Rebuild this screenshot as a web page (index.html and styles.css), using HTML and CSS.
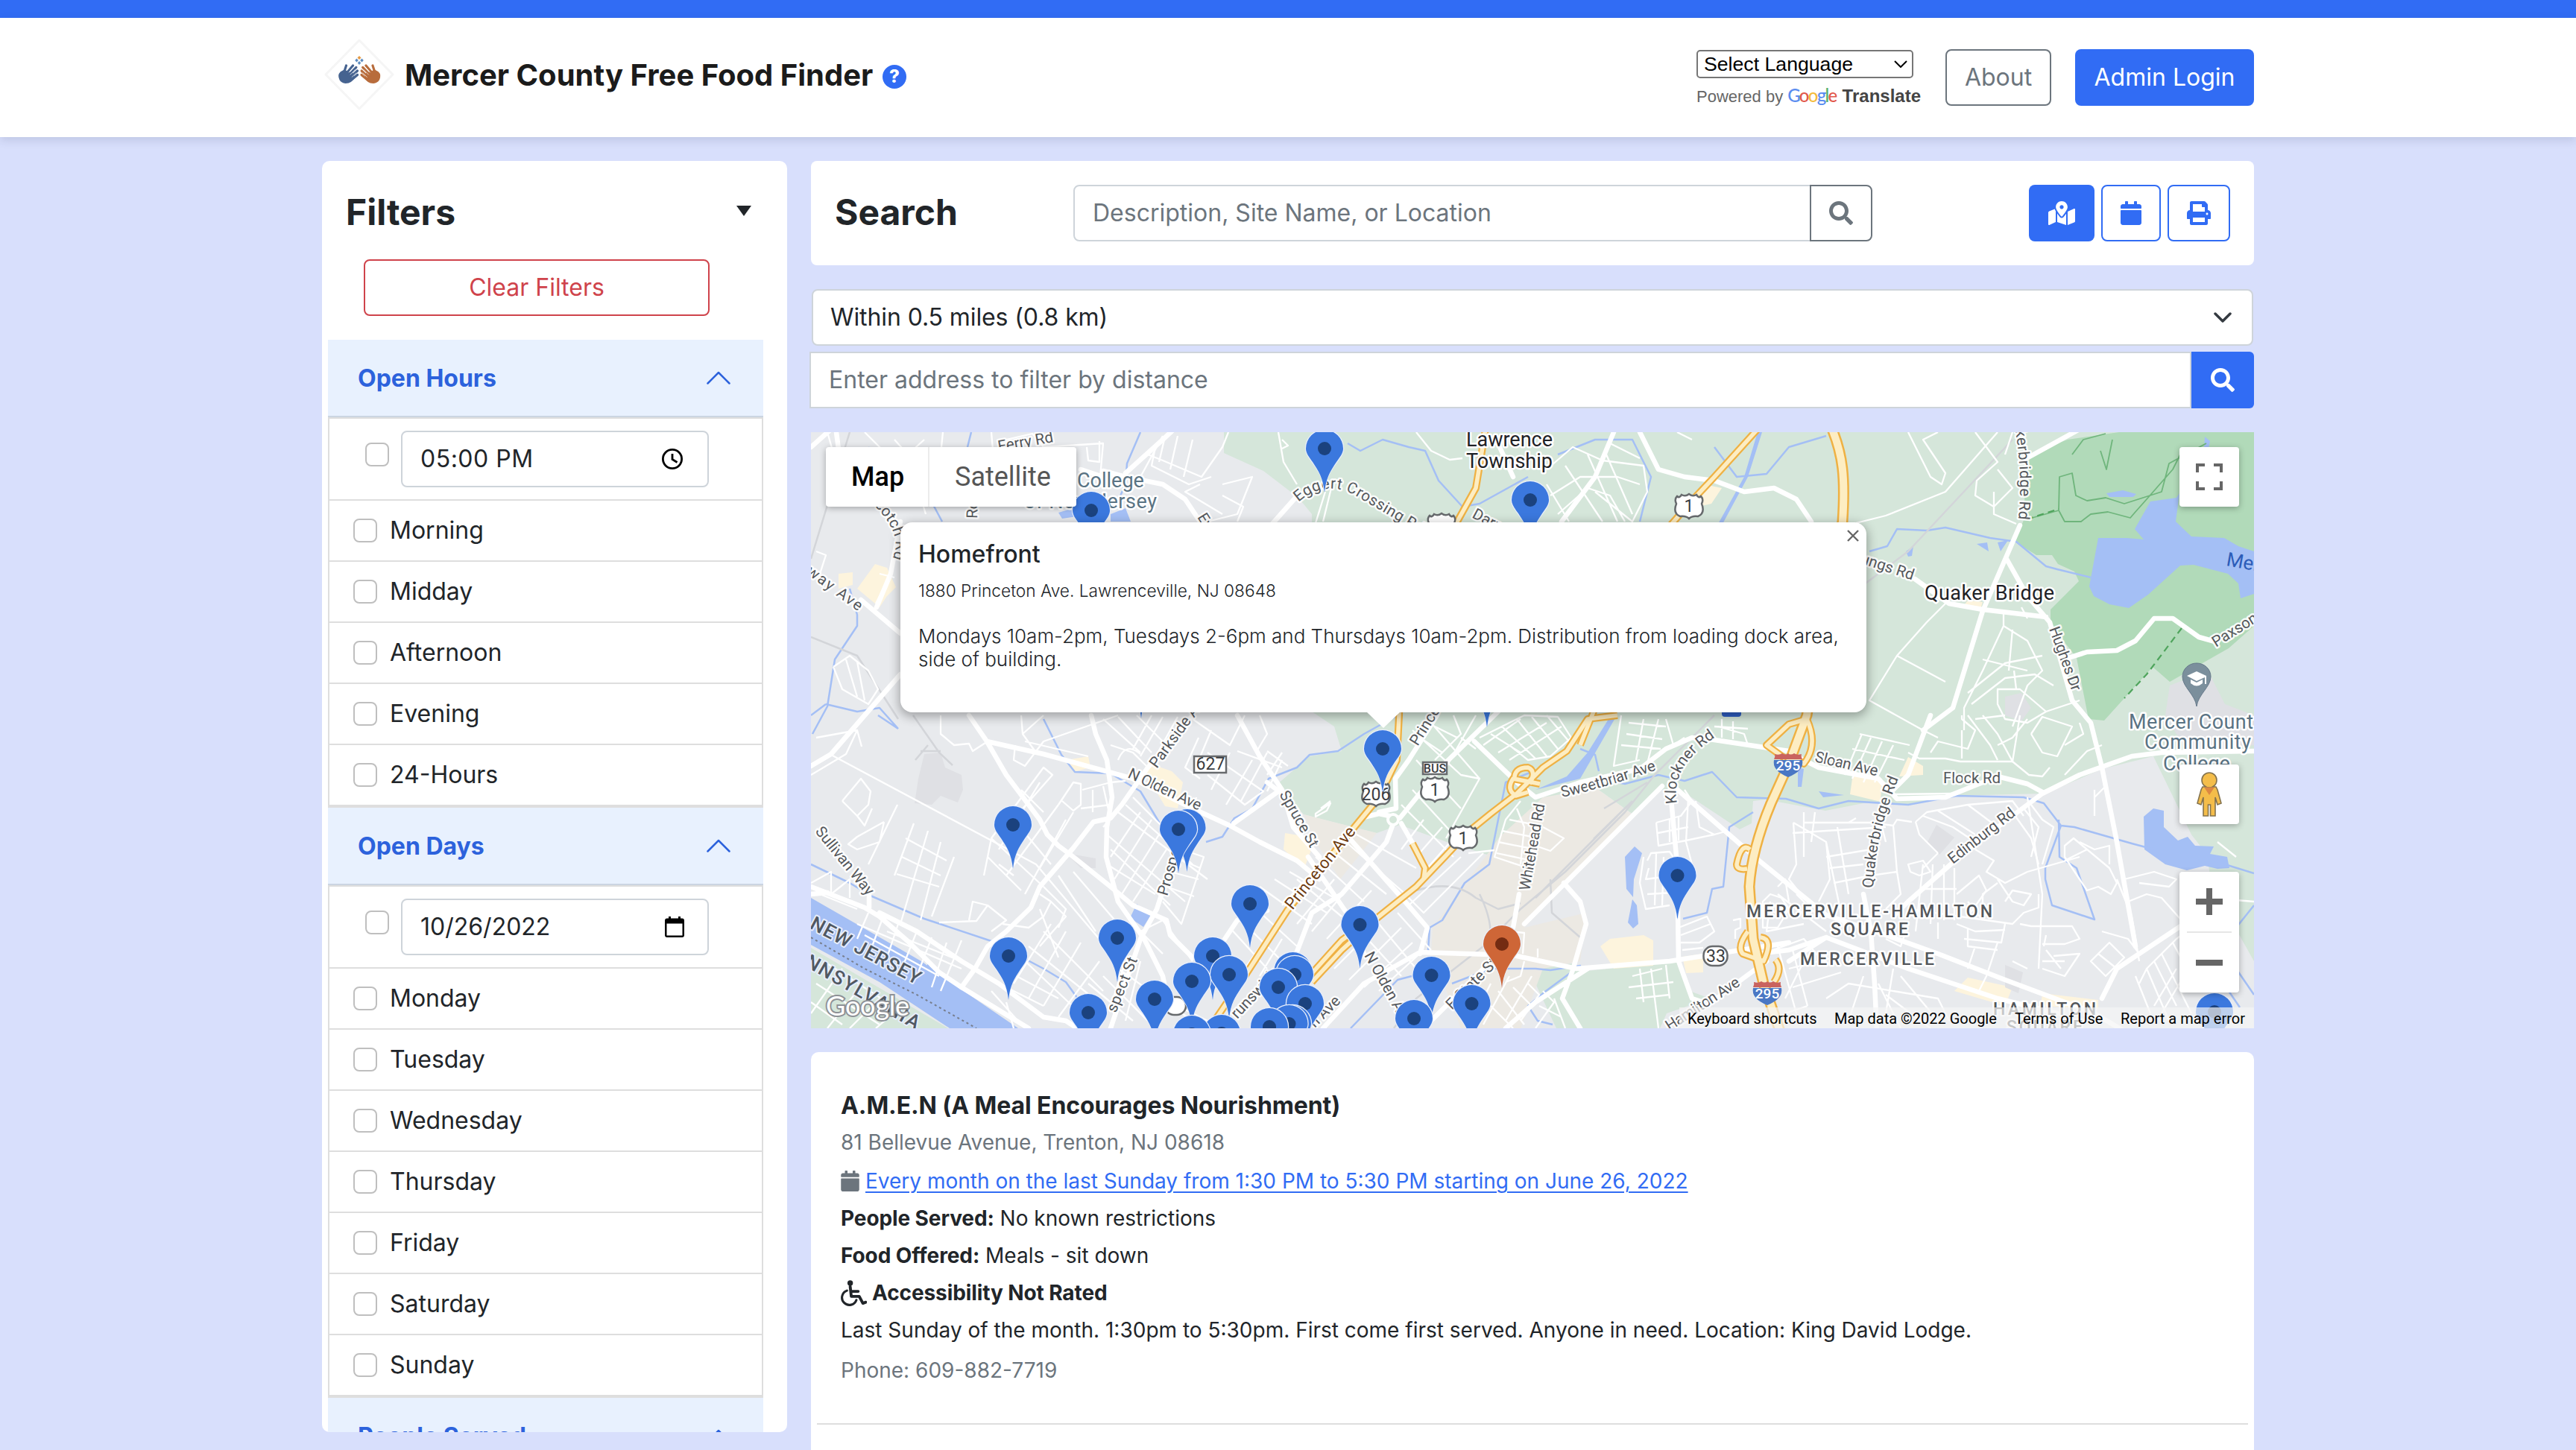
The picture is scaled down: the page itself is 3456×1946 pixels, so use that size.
FILE: index.html
```html
<!DOCTYPE html>
<html lang="en">
<head>
<meta charset="utf-8">
<title>Mercer County Free Food Finder</title>
<link rel="stylesheet" href="styles.css">
</head>
<body>
<svg class="sprite" aria-hidden="true">
  <symbol id="i-search" viewBox="0 0 512 512"><path d="M505 442.7L405.3 343c-4.5-4.5-10.6-7-17-7H372c27.6-35.3 44-79.7 44-128C416 93.1 322.9 0 208 0S0 93.1 0 208s93.1 208 208 208c48.3 0 92.7-16.4 128-44v16.3c0 6.4 2.5 12.5 7 17l99.7 99.7c9.4 9.4 24.6 9.4 33.9 0l28.3-28.3c9.4-9.4 9.4-24.6.1-34zM208 336c-70.7 0-128-57.2-128-128 0-70.7 57.2-128 128-128 70.7 0 128 57.2 128 128 0 70.7-57.2 128-128 128z"/></symbol>
  <symbol id="i-calendar" viewBox="0 0 448 512"><path d="M12 192h424c6.6 0 12 5.4 12 12v260c0 26.5-21.5 48-48 48H48c-26.5 0-48-21.5-48-48V204c0-6.6 5.4-12 12-12zm436-44v-36c0-26.5-21.5-48-48-48h-48V12c0-6.6-5.4-12-12-12h-40c-6.6 0-12 5.4-12 12v52H160V12c0-6.6-5.4-12-12-12h-40c-6.6 0-12 5.4-12 12v52H48C21.5 64 0 85.5 0 112v36c0 6.6 5.4 12 12 12h424c6.6 0 12-5.4 12-12z"/></symbol>
  <symbol id="i-print" viewBox="0 0 512 512"><path d="M448 192V77.25c0-8.49-3.37-16.62-9.37-22.63L393.37 9.37c-6-6-14.14-9.37-22.63-9.37H96C78.33 0 64 14.33 64 32v160c-35.35 0-64 28.65-64 64v112c0 8.84 7.16 16 16 16h48v96c0 17.67 14.33 32 32 32h320c17.67 0 32-14.33 32-32v-96h48c8.84 0 16-7.16 16-16V256c0-35.35-28.65-64-64-64zm-64 256H128v-96h256v96zm0-224H128V64h192v48c0 8.84 7.16 16 16 16h48v96zm48 72c-13.25 0-24-10.75-24-24 0-13.26 10.75-24 24-24s24 10.74 24 24c0 13.25-10.75 24-24 24z"/></symbol>
  <symbol id="i-map" viewBox="0 0 576 512"><path d="M288 0c-69.59 0-126 56.41-126 126 0 56.26 82.35 158.8 113.9 196.02 6.39 7.54 17.82 7.54 24.2 0C331.65 284.8 414 182.26 414 126 414 56.41 357.59 0 288 0zm0 168c-23.2 0-42-18.8-42-42s18.8-42 42-42 42 18.8 42 42-18.8 42-42 42zM20.12 215.95A32.006 32.006 0 0 0 0 245.66v250.32c0 11.32 11.43 19.06 21.94 14.86L160 448V214.92c-8.84-15.98-16.07-31.54-21.25-46.42L20.12 215.95zM288 359.67c-14.07 0-27.38-6.18-36.51-16.96-19.66-23.2-40.57-49.62-59.49-76.72v182l192 64V266c-18.92 27.09-39.82 53.52-59.49 76.72-9.13 10.77-22.44 16.95-36.51 16.95zm266.06-198.51L416 224v288l139.88-55.95A31.996 31.996 0 0 0 576 426.34V176.02c0-11.32-11.43-19.06-21.94-14.86z"/></symbol>
  <symbol id="i-chevron-up" viewBox="0 0 32 18"><path d="M1.5 16.500L16 2l14.500 14.500" fill="none" stroke="currentColor" stroke-width="2.500" stroke-linecap="round" stroke-linejoin="round"/></symbol>
  <symbol id="i-wheelchair" viewBox="0 0 36 36"><circle cx="13" cy="4" r="3.800"/><path d="M13 9l1.500 13.500h11L30.500 32l4-1.500M14 15.500h10" fill="none" stroke="currentColor" stroke-width="4" stroke-linejoin="round" stroke-linecap="round"/><path d="M8.500 14.500A10.200 10.200 0 1 0 21.500 27.500" fill="none" stroke="currentColor" stroke-width="3.200" stroke-linecap="round"/></symbol>
  <symbol id="i-hand" viewBox="0 0 80 78"><path d="M8 31L24 22L34 28L58 36L64 58L50 72Q42 78 28 78Q12 77 4 64Q-3 48 2 38z"/><path d="M20 40L31 6M27 43L58 6M40 46L71 13M48 54L76 27M50 65L77 43" fill="none" stroke="currentColor" stroke-width="9.500" stroke-linecap="round"/><path d="M41 34L60 13M47 43L68 22M53 53L72 35" fill="none" stroke="#fff" stroke-width="2"/></symbol>
</svg>

<div class="topbar"></div>
<header class="header">
  <div class="container header-row">
    <div class="brand">
      <svg class="logo" viewBox="0 0 96 104">
        <path class="logo-tile" d="M48 6L93 52L48 98L3 52z"/>
        <use href="#i-hand" class="hand-blue" x="20" y="38" width="27" height="26"/>
        <g transform="translate(96.500 0) scale(-1 1)"><use href="#i-hand" class="hand-brown" x="20" y="38" width="27" height="26"/></g>
        <path class="spark-a" d="M48 27l2.500 2.500l-2.500 2.500l-2.500-2.500z"/>
        <path class="spark-b" d="M44.500 30.500l2.300 2.500l-2.300 2.500l-2.300-2.500zM51.500 30.500l2.300 2.500l-2.300 2.500l-2.300-2.500zM48 34l2.300 2.500l-2.300 2.500l-2.300-2.500z"/>
      </svg>
      <h1 class="site-title">Mercer County Free Food Finder</h1>
      <span class="help">?</span>
    </div>
    <div class="header-actions">
      <div class="translate">
        <div class="lang-select"><span>Select Language</span><svg class="lang-caret" viewBox="0 0 18 10"><path d="M1 1l8 8l8-8"/></svg></div>
        <div class="powered"><span>Powered by</span> <span class="g-logo"><span class="g-b">G</span><span class="g-r">o</span><span class="g-y">o</span><span class="g-b">g</span><span class="g-g">l</span><span class="g-r">e</span></span> <b>Translate</b></div>
      </div>
      <a class="btn btn-about">About</a>
      <a class="btn btn-primary btn-login">Admin Login</a>
    </div>
  </div>
</header>

<main class="container main">
  <aside class="filters">
    <div class="filters-head"><h2 class="panel-title">Filters</h2><svg class="tri" viewBox="0 0 20 14"><path d="M0 0h20L10 14z"/></svg></div>
    <a class="btn btn-clear">Clear Filters</a>
    <div class="accordion">
      <section>
        <h3 class="acc-head"><span>Open Hours</span><svg class="chev"><use href="#i-chevron-up"/></svg></h3>
        <ul class="acc-list">
          <li class="pick"><input type="checkbox"><div class="field time"><span>05:00 PM</span><svg class="clock" viewBox="0 0 28 28"><circle cx="14" cy="14" r="12.600"/><path d="M14 7v7.500l6.500 4"/></svg></div></li>
          <li><input type="checkbox"><span>Morning</span></li>
          <li><input type="checkbox"><span>Midday</span></li>
          <li><input type="checkbox"><span>Afternoon</span></li>
          <li><input type="checkbox"><span>Evening</span></li>
          <li><input type="checkbox"><span>24-Hours</span></li>
        </ul>
      </section>
      <section>
        <h3 class="acc-head"><span>Open Days</span><svg class="chev"><use href="#i-chevron-up"/></svg></h3>
        <ul class="acc-list">
          <li class="pick"><input type="checkbox"><div class="field date"><span>10/26/2022</span><svg class="cal" viewBox="0 0 26 28"><path d="M3 2.500h2V0h3v2.500h10V0h3v2.500h2a3 3 0 0 1 3 3V25a3 3 0 0 1-3 3H3a3 3 0 0 1-3-3V5.500a3 3 0 0 1 3-3zM2.500 9.500V25.500h21V9.500z" fill-rule="evenodd"/></svg></div></li>
          <li><input type="checkbox"><span>Monday</span></li>
          <li><input type="checkbox"><span>Tuesday</span></li>
          <li><input type="checkbox"><span>Wednesday</span></li>
          <li><input type="checkbox"><span>Thursday</span></li>
          <li><input type="checkbox"><span>Friday</span></li>
          <li><input type="checkbox"><span>Saturday</span></li>
          <li><input type="checkbox"><span>Sunday</span></li>
        </ul>
      </section>
      <section>
        <h3 class="acc-head"><span>People Served</span><svg class="chev"><use href="#i-chevron-up"/></svg></h3>
      </section>
    </div>
  </aside>

  <div class="content">
    <div class="searchbar">
      <h2 class="panel-title">Search</h2>
      <div class="search-group"><input class="text-input" type="text" placeholder="Description, Site Name, or Location"><a class="btn btn-search"><svg class="ic32"><use href="#i-search"/></svg></a></div>
      <div class="views">
        <a class="btn btn-primary v-map"><svg class="ic36"><use href="#i-map"/></svg></a>
        <a class="btn btn-line v-cal"><svg class="ic28"><use href="#i-calendar"/></svg></a>
        <a class="btn btn-line v-print"><svg class="ic32"><use href="#i-print"/></svg></a>
      </div>
    </div>

    <div class="distance">
      <div class="distance-select"><span>Within 0.5 miles (0.8 km)</span><svg class="sel-caret" viewBox="0 0 24 14"><path d="M2 2l10 10l10-10"/></svg></div>
      <div class="address"><input class="text-input" type="text" placeholder="Enter address to filter by distance"><a class="btn btn-primary btn-addr"><svg class="ic32"><use href="#i-search"/></svg></a></div>
    </div>

    <div class="map">
      <svg class="map-canvas" viewBox="1088 580 1936 800">
        <defs>
          <path id="us1s" d="M2170 960L2130 965L2102 1008L2070 1030L2035 1065L2000 1092L1968 1118L1940 1148L1900 1190L1850 1230L1800 1275L1760 1318"/>
          <path id="us1n" d="M2358 576L2300 640L2270 672L2235 712L2180 850L2140 950L2120 1000"/>
          <path id="i295" d="M2458 576C2472 610 2476 640 2472 700L2440 860L2424 960L2400 1025L2376 1078Q2350 1140 2347 1190L2352 1260L2366 1320L2388 1384"/>
          <path id="us206" d="M1993 576L1980 655L1955 700L1880 860L1877 960L1874 1020L1850 1070L1813 1115L1727 1222L1670 1310L1620 1384"/>
          <path id="ramps" d="M2066 1052L2030 1045Q2020 1060 2034 1068L2050 1063M2032 1048Q2030 1030 2050 1030Q2062 1035 2052 1052M2395 1018L2370 1000L2400 972L2424 965Q2440 1000 2420 1025L2402 1015M2348 1140Q2336 1130 2330 1160Q2330 1168 2344 1166M2345 1250Q2330 1270 2338 1280L2366 1290Q2380 1260 2362 1258M2380 1318Q2392 1300 2382 1288M1895 1132L1912 1165L1910 1180M1755 1312L1800 1262L1830 1240"/>
          <path id="p-egg" d="M1742 674Q1776 644 1815 663L1905 716"/>
          <path id="p-scotch" d="M1164 670Q1216 715 1196 752"/>
          <path id="p-klock" d="M2250 1078Q2240 1030 2300 990L2312 980"/>
          <path id="p-qb1" d="M2696 540Q2718 630 2706 712"/>
          <path id="p-qb2" d="M2513 1192Q2516 1120 2548 1042"/>
          <path id="p-sweet" d="M2096 1070Q2150 1058 2226 1032"/>
          <g id="pin"><path class="pin-halo" d="M0 82C-2 62-8 54-16 43C-21 36-25 31-25 25A25 25 0 0 1 25 25C25 31 21 36 16 43C8 54 2 62 0 82z"/><path d="M0 84C-2 64-8 55-16 43C-21 36-25 31-25 25A25 25 0 0 1 25 25C25 31 21 36 16 43C8 55 2 64 0 84z"/><circle class="pin-dot" cx="0" cy="25" r="9"/></g>
          <path id="us" d="M-16-13Q-13-10-10-15Q-5-12 0-16Q5-12 10-15Q13-10 16-13Q20-9 17-3Q22 10 12 14Q4 13 0 17Q-4 13-12 14Q-22 10-17-3Q-20-9-16-13z"/>
          <g id="is"><path class="is-b" d="M-19-6H19Q22 8 0 17Q-22 8-19-6z"/><path class="is-r" d="M-19-7Q-17-11-18-14Q-12-12-8-15Q-3-12 0-15Q3-12 8-15Q12-12 18-14Q17-11 19-7z"/></g>
        </defs>

        <rect class="land" x="1088" y="580" width="1936" height="800"/>
        <g class="green">
          <path d="M1642 580H3024V1030L2889 1015L2820 1032L2744 1065L2700 1066L2625 1068L2559 1080L2505 1077L2449 1088L2369 1073L2352 1075L2350 1105L2334 1113L2254 1060H2227L2191 1093L2142 1058L2070 1073L1995 1147L1941 1130L1878 1107L1847 1118L1749 1093L1713 1053L1757 1015L1800 1008L1790 975L1760 955V690L1742 668L1695 632L1642 608z"/>
          <path d="M2889 1015L2940 1120L2961 1147L2965 1175L3000 1247L3024 1290V1000z"/>
          <path d="M2053 1305L2070 1297L2110 1293L2130 1303L2253 1290L2267 1330L2294 1340L2236 1360L2227 1380H2088z"/>
          <path d="M1088 1272L1272 1380H1088z"/>
        </g>
        <path class="park" d="M2719 610L2774 590L2843 580H3024V840L2990 870L2911 915L2888 895L2823 967L2802 965L2786 883L2751 837V818L2789 780L2783 767L2761 757L2753 745H2732L2703 727L2715 698z"/>
        <g class="beige">
          <path d="M1995 1147L2012 1123L2070 1070L2142 1058L2190 1093L2045 1245L2128 1225L2120 1290L2070 1300L2040 1380H1960L1920 1277L1922 1245L1970 1180z"/>
          <path d="M1749 1093L1847 1118L1825 1146L1798 1180L1765 1130z"/>
        </g>
        <g class="shop">
          <path d="M1540 1024L1572 1035L1587 1050L1580 1085L1563 1082L1538 1040z"/>
          <path d="M1724 1118L1765 1125L1750 1165L1722 1140z"/>
          <path d="M1174 757L1190 762L1202 788L1190 800L1180 815L1150 790z"/><path d="M1125 770L1144 768V785L1125 790z"/>
          <path d="M1431 1020L1460 1015L1463 1030L1440 1036z"/>
          <path d="M2147 1270L2160 1260L2205 1255L2218 1262V1296L2165 1300z"/><path d="M2257 1284L2285 1280V1305L2262 1306z"/>
          <path d="M2486 1038L2525 1045L2523 1076L2482 1066z"/><path d="M2560 1016L2580 1028V1040L2548 1042z"/>
          <path d="M2640 1312L2700 1325L2690 1350L2622 1330z"/><path d="M2740 1333L2815 1342V1354L2738 1350z"/>
          <path d="M2286 650L2310 655L2296 676L2278 680z"/><path d="M2640 806L2660 808L2657 818L2635 812z"/>
        </g>
        <g class="airport">
          <path d="M1240 1012L1262 1010L1268 1030L1290 1040L1292 1060L1285 1077L1262 1068L1250 1080L1227 1078L1232 1045z"/>
          <path d="M2690 1295L2714 1305L2708 1333L2690 1325z"/><path d="M2598 1107L2622 1124L2602 1147L2586 1130z"/>
          <path d="M2911 920L2962 900L2985 945L3024 960V1000L2935 1010L2905 960z"/><path d="M2690 935L2712 930L2725 950L2712 968L2690 960z"/>
          <path d="M1430 1145L1470 1152V1165L1450 1165z"/>
        </g>
        <g class="water">
          <path d="M1088 1205L1236 1290L1268 1313L1366 1380H1274L1180 1318L1088 1268z"/>
          <path d="M2815 722H2853L2876 724L2864 710L2885 673L2920 668L2924 662L2919 700L2940 720L2984 722L3003 733L3024 740V797L3006 803L3003 783L2989 770L2943 758L2925 759L2882 798L2856 816L2830 811L2809 800L2803 787z"/>
          <path d="M2826 662L2848 658L2866 663L2862 667H2830zM2958 586L2965 592L2963 602H2957zM2652 730L2666 728L2668 740zM2680 728L2694 725L2684 740zM2557 740L2567 733L2565 746L2560 747z"/>
          <path d="M2180 1150L2193 1136L2203 1145L2192 1180L2191 1204L2182 1193zM2190 1207L2196 1215L2198 1240L2191 1246L2184 1238z"/>
          <path d="M2876 1096L2889 1085L2903 1088V1110L2922 1128L2935 1123L2945 1135L2970 1136L2965 1146L2988 1150L2991 1165L2975 1166L2958 1162L2934 1168L2905 1160L2877 1140z"/>
          <path d="M1525 1213L1544 1228L1534 1244L1516 1232zM1245 1292L1254 1303L1240 1306zM1420 688L1440 682L1452 692L1425 696zM1490 690L1510 682L1517 700H1490z"/>
          <path d="M2102 1042L2130 1010L2160 962H2168L2120 1045L2060 1060zM2412 1030L2420 1032L2417 1056H2412zM2440 1062L2474 1067L2446 1070z"/>
          <path d="M2340 640L2358 580H2364L2345 640L2310 705H2304z"/>
        </g>
        <g class="creek">
          <path d="M1088 1160L1140 1185L1170 1203L1240 1233L1330 1263L1400 1300L1430 1318L1448 1343M1400 965L1424 1013L1442 1036L1490 1038L1530 1062L1556 1105M1618 1130L1640 1123L1656 1098L1680 1085L1702 1045L1740 1030L1757 1013L1795 1008L1830 985L1875 960M1178 960L1205 978M1090 985L1110 948L1120 885L1150 840V825L1140 790M1108 945L1150 955L1180 950L1205 978M1088 960L1108 945M1165 600L1185 640M1298 600L1303 580M1240 655L1264 700M1530 580L1512 622L1510 650L1500 672M1808 595L1825 605L1855 590L1890 600L1912 605L1930 645L1962 680L1985 676L2050 640M2090 610L2140 590L2190 590L2215 640L2200 700M2300 600L2330 640L2370 636L2400 600L2450 585M2508 740L2532 733L2545 710L2585 712L2610 708L2670 722L2705 727L2745 760L2760 764L2805 775"/>
          <path d="M2070 1030L2020 1050L2010 1100L1998 1160L1965 1185L1935 1235L1918 1245L1916 1276M1812 1380L1875 1315L1894 1310M1948 1320L2000 1300L2060 1300L2080 1302L2120 1296L2074 1330L2050 1350L2063 1370L2083 1375M2170 1050L2180 1052L2225 1040L2260 1048L2297 1036L2330 1070L2396 1072L2440 1085L2480 1075L2560 1080L2625 1068L2715 1070L2742 1078L2765 1108L2783 1110L2825 1122L2860 1132L2890 1140M2765 1108L2744 1165V1180L2753 1215L2810 1234L2786 1165L2763 1150L2762 1100M3024 1215L3000 1245M2985 1160L3024 1172M2258 1233L2290 1225L2297 1193L2312 1190L2320 1110L2352 1090M2120 1005L2140 1013L2145 1035M3000 1300L3024 1335M2990 1330L3005 1352"/>
        </g>
        <g class="trail">
          <path d="M2719 697L2762 685L2770 700L2792 700L2805 690L2828 687L2858 695L2864 688L2880 670L2915 630L2925 610M2762 685L2763 640L2780 635L2785 665L2800 672L2825 668L2850 676L2900 660L2910 622L2960 595M2780 610L2795 590L2825 582M2818 605L2826 630L2834 590"/>
          <path class="dash" d="M2927 843L2880 905L2850 937M2719 697L2762 683"/>
        </g>
        <path class="border-line" d="M1088 1258L1160 1300L1230 1335L1310 1380"/>
        <g class="rail">
          <path d="M1225 960L1260 1010L1278 1027M1235 1008L1262 1008M1228 1020L1245 1000M1088 855L1150 880L1205 965M1088 750L1140 580M2700 590L2560 740L2480 800M2300 960L2220 1040L2180 1090L2100 1170L2040 1220L1990 1270L1900 1340L1870 1380M2210 1050L2152 1085M2190 1075L2138 1126M2170 1095L2060 1205M1900 1195Q1950 1180 1980 1205L2010 1220L2040 1212M1985 1200Q2005 1240 1998 1270M2080 1180L2082 1225L2120 1258"/>
        </g>

        <g class="minor">
          <path d="M1110 580L1122 622L1110 640M1160 580L1230 650L1242 690M1200 590L1218 610L1240 590M1265 580L1262 610L1300 625M1330 580L1335 640M1350 590L1385 582L1400 600L1480 595L1476 640M1458 600L1460 618L1475 620V592M1540 610L1560 618L1612 640L1640 600L1648 580M1550 600L1545 625L1595 650L1625 640M1562 590L1555 620M1580 585L1570 630M1600 590L1588 640M1530 640L1560 585M1610 650L1590 660L1640 690M1640 650L1680 640L1660 690L1620 700M1640 665L1668 680L1660 700M1715 580L1722 620L1740 650M1720 590L1728 598L1720 602M1775 700L1786 655M1765 702L1778 660M1900 580L1920 605L1945 617L1962 615"/>
          <path d="M2075 630L2110 600L2150 618L2205 625L2210 660L2190 700L2140 660M2080 665L2120 640L2170 640L2200 650M2090 690L2130 655L2160 665L2180 700M2100 625L2150 700M2130 610L2170 700M2155 610L2190 690M2075 650L2105 700M2160 595L2200 615M2250 580L2270 590M2560 580L2590 640L2605 650L2610 635L2580 590L2600 580M2650 580L2680 620L2652 645L2650 665L2675 680L2700 655L2680 630M2675 660V690L2705 703M2490 702L2530 692L2610 660L2680 580M2650 580L2665 600M2700 580L2690 610"/>
          <path d="M2610 810L2585 835L2545 880L2508 940L2580 980L2600 990M2545 880L2610 915M2688 820V840L2720 860L2740 900L2720 920L2700 975M2688 840L2660 900L2635 950V980M2660 885L2720 900M2700 845L2695 900M2640 930L2690 890L2740 880M2645 945L2690 910L2730 905L2755 920M2680 945L2680 925L2710 925L2745 955L2720 970L2690 965zM2705 925L2702 900M2745 955L2790 940M2720 830L2712 815"/>
          <path d="M1095 990L1150 980L1135 1012L1088 1040M1150 980L1156 1002M1115 1013L1390 1160L1500 1290M1130 1075L1155 1045L1168 1062L1165 1080L1150 1095L1130 1075M1150 1095L1160 1108L1170 1085M1186 1103L1180 1130L1150 1140L1138 1133L1150 1123L1186 1103M1204 1080L1165 1160M1226 1105L1200 1175M1245 1115L1208 1240M1262 1130L1235 1235M1280 1150L1250 1230M1215 1125L1270 1155M1210 1150L1262 1175M1203 1173L1260 1190M1260 1238L1310 1236L1325 1215L1305 1210L1300 1235M1325 1215L1350 1235L1330 1250"/>
          <path d="M1118 895L1140 880L1165 900L1178 925L1165 945L1130 925L1118 895M1135 885L1150 935M1150 888L1160 940M1100 770L1108 745L1095 740M1180 770L1200 775M1185 790L1175 810"/>
          <path d="M1320 1175L1330 1125L1400 1190M1330 1125L1400 1030L1412 1040L1350 1110M1325 1150L1370 1195M1340 1140L1395 1050M1350 1175L1420 1080M1375 1200L1430 1100M1340 1160L1360 1175M1395 1165L1440 1090M1410 1160L1360 1100M1400 1090L1370 1060M1262 960V985L1280 1000L1300 998L1305 1008L1325 995M1370 960L1372 985L1390 1010M1372 985L1400 960M1362 1000L1360 1020L1375 1028L1400 995L1500 960M1375 995L1460 1015"/>
          <path d="M1420 1080L1440 1050L1450 1052V1080L1440 1088L1425 1075M1452 1060L1490 1050L1510 1048M1450 1085L1490 1080M1466 1060V1090M1480 1055L1490 1100M1500 1090L1620 1180M1510 1080L1600 1160M1520 1070L1560 1110M1485 1120L1590 1210M1490 1140L1570 1215M1485 1160L1550 1200M1510 1075L1480 1110M1530 1090L1490 1150M1545 1100L1495 1180M1555 1120L1505 1200M1565 1140L1520 1210M1490 1000L1520 1010L1540 1030M1480 965L1530 1010M1500 962L1545 1010M1525 960L1560 995M1545 960L1520 1005M1560 962L1530 1015M1580 962L1545 1025M1500 1020Q1510 995 1530 1012"/>
          <path d="M1600 965L1650 1000L1670 960M1608 990L1590 1030L1610 1045M1620 1040L1670 1080L1695 1062L1620 1010M1625 980L1600 1040M1650 1010L1625 1060M1680 1020L1645 1080M1700 1010L1665 1075M1660 1008L1720 1030M1605 1070L1590 1130M1600 1145L1615 1150L1585 1240L1560 1210M1575 1150L1610 1165M1570 1170L1608 1180M1565 1190L1602 1203M1700 1008L1728 1028M1690 960L1700 985L1685 1010M1720 1010L1700 1040"/>
          <path d="M1440 1170L1500 1240M1420 1175L1470 1250M1400 1190L1430 1220L1420 1245M1345 1240L1380 1245L1400 1230L1410 1210L1395 1200M1410 1210L1430 1230L1395 1270M1395 1220L1420 1285M1380 1270L1480 1350M1400 1250L1480 1330M1370 1285L1460 1370M1410 1240L1360 1320M1430 1250L1380 1340M1450 1265L1400 1350M1475 1290L1420 1365M1345 1300L1420 1340M1500 1300L1600 1370M1480 1310L1550 1380M1510 1290L1490 1350M1530 1290L1510 1370M1560 1280L1530 1250L1560 1235L1600 1290M1540 1330L1620 1370M1460 1320L1520 1370"/>
          <path d="M1088 1185L1115 1170V1200L1140 1180V1205M1100 1200L1150 1220M1150 1240L1290 1300M1165 1225L1150 1260M1185 1230L1170 1270M1205 1240L1190 1285M1230 1250L1210 1300M1250 1258L1230 1310M1270 1265L1250 1325M1290 1262L1262 1330M1160 1255L1260 1310M1190 1250L1290 1290M1320 1310L1400 1350M1330 1330L1370 1375M1350 1345L1360 1380"/>
          <path d="M1088 1360L1130 1300M1110 1380L1150 1330M1140 1380L1180 1340M1175 1380L1210 1350M1105 1290L1190 1345M1095 1320L1180 1375M1088 1345L1130 1375"/>
          <path d="M1650 1245L1700 1300M1665 1235L1720 1290M1680 1215L1740 1270M1705 1250L1670 1300M1720 1260L1690 1310M1740 1275L1705 1330M1690 1190L1760 1240M1710 1180L1780 1225M1730 1170L1790 1205M1740 1240L1790 1180M1720 1215L1770 1160M1760 1250L1810 1190M1780 1260L1840 1195M1765 1150L1830 1210M1785 1140L1860 1200M1800 1125L1880 1195M1820 1120L1900 1165M1740 1180L1800 1230M1755 1290L1730 1330M1790 1300L1850 1240M1810 1315L1880 1245M1830 1325L1895 1265M1850 1330L1910 1275M1830 1255L1880 1310M1850 1240L1900 1300M1875 1225L1920 1275M1880 1195L1910 1225L1990 1145M1890 1215L1960 1150M1720 1020L1700 1062M1765 1092L1785 1078L1780 1088L1765 1096zM1772 1085L1785 1075"/>
          <path d="M1895 980L1960 1040L1985 1045L1940 1125M1920 970L1985 1045M1900 1020L1960 1085M1880 1080L1950 1150M1895 1060L1950 1120M1910 1100L1880 1140M1935 1110L1900 1150M1950 1125L1915 1165M1925 975L1955 990L1935 1010L1905 990M1950 960L1960 985L1925 1020M1980 960L1940 1030M1960 990L1980 1005M1985 990L2045 960L2090 962L2108 990L2080 1015L2050 1020L2025 1000M2000 985L2040 1010M2015 975L2060 1018M2035 965L2075 1015M2055 962L2090 1005M2075 960L2105 995M1990 1000L2040 965M2010 1010L2075 970M2025 1020L2095 975"/>
          <path d="M2040 1075L2020 1100L2005 1150L2050 1165M2035 1085L2045 1110L2040 1160M2015 1115L2065 1125M2010 1130L2060 1140M2008 1145L2055 1155M2025 1100L2065 1108M2070 1110L2098 1125L2080 1142L2060 1135M1970 1145L2005 1141M2175 960L2165 1028L2200 1020M2185 970L2235 975M2182 985L2230 992M2175 1000L2228 1005M2205 965L2195 1020M2225 965L2210 1025M2235 965L2245 1000L2260 990M2305 975L2340 985L2345 1000M2310 965L2310 990M2325 968V992M2300 975L2345 978"/>
          <path d="M2222 1104L2255 1095L2270 1075L2260 1060M2222 1104L2225 1135L2262 1128L2300 1120L2318 1115M2224 1118L2265 1110M2240 1100V1130M2252 1095V1128M2275 1075L2280 1110L2300 1120M2265 1070L2262 1130L2270 1160L2250 1175M2210 1155L2215 1145L2240 1143L2248 1155M2205 1150L2200 1185L2208 1220L2240 1215M2212 1165L2208 1180L2245 1175M2210 1200L2245 1198M2222 1145L2220 1215M2232 1150L2230 1215M2252 1245L2290 1230L2300 1250L2280 1265L2255 1265M2255 1255L2295 1240M2257 1275L2285 1272M2325 1235L2335 1233V1245L2328 1248V1260M2365 1210L2375 1200L2390 1205L2400 1220L2385 1245L2365 1245zM2370 1220L2395 1230M2385 1190L2395 1180L2400 1210"/>
          <path d="M2190 1310L2230 1300M2185 1325L2245 1318M2195 1340L2240 1335M2200 1300L2205 1345M2215 1300L2225 1380M2235 1295L2240 1340M2050 1320L2065 1335L2040 1370M2030 1325L2055 1350M2010 1330L2045 1375M1990 1340L2030 1380M2000 1320L1975 1370M2025 1310L1990 1375M2055 1310L2020 1370M2070 1330L2085 1345L2060 1380M2085 1340L2100 1380M2065 1350L2095 1365M2025 1250L2045 1252L2043 1280M2063 1285V1273M2045 1290L2040 1310L2020 1318"/>
          <path d="M2498 985L2475 1040M2510 990L2485 1045M2525 995L2500 1050M2540 1000L2515 1050M2495 985L2562 1000M2485 1005L2555 1020M2540 1066L2620 1065M2560 1010L2575 1018H2610L2630 1022L2700 1022M2590 1010L2600 995L2640 1005L2650 980L2632 965V960M2632 980V1018M2640 960L2670 1000L2680 1020M2660 960L2680 985L2700 1022L2722 1040L2740 1042L2750 1030M2650 965L2690 960M2680 1000L2700 990L2720 965M2700 1022L2710 960M2725 985L2740 962L2780 975L2760 1015L2740 1010L2725 985M2770 1000L2795 985L2790 970M2820 1000L2800 1008L2770 1040"/>
          <path d="M2406 1104L2410 1160L2400 1180L2420 1205M2406 1104L2425 1115L2450 1130L2455 1180L2440 1210M2420 1090V1150M2435 1090L2430 1130M2405 1118L2450 1115L2530 1110M2420 1104H2510L2540 1108L2545 1100L2565 1103M2450 1150L2510 1140M2455 1165L2500 1160M2460 1185L2510 1175L2545 1170L2550 1200L2530 1220M2450 1130L2475 1250M2465 1110L2480 1200M2410 1200L2440 1230M2375 1210L2370 1250L2420 1240M2385 1200L2450 1250M2440 1104H2480L2490 1098M2520 1090L2530 1130M2540 1108L2545 1170"/>
          <path d="M2570 1103L2585 1090L2640 1080L2700 1075L2715 1095M2570 1103L2575 1120L2600 1145M2580 1095L2620 1110L2650 1130L2680 1110L2640 1080M2600 1088L2650 1120M2560 1160L2580 1155L2590 1170L2575 1175L2563 1170zM2600 1145L2580 1165M2650 1140L2675 1155L2665 1170L2690 1185L2720 1170M2725 1080L2740 1100L2755 1110L2740 1160M2715 1085L2735 1110L2725 1150M2700 1090L2725 1125L2735 1160M2680 1180L2700 1210L2715 1215L2725 1200L2700 1195L2690 1210M2680 1185L2660 1200V1230"/>
          <path d="M2770 1135L2782 1125L2830 1165L2840 1185L2832 1200L2815 1190L2800 1195L2790 1180L2770 1150zM2790 1130L2810 1140L2830 1135V1160M2770 1155L2800 1140M2720 1170L2790 1150M2850 1180L2890 1170L2920 1180L2910 1190L2870 1185M2855 1210L2880 1200L2900 1205L2940 1250M2810 1090V1070L2825 1055M2810 1095L2810 1060"/>
          <path d="M2580 1160L2570 1250M2593 1160L2590 1240M2608 1160V1235M2622 1165V1235M2580 1193H2625M2625 1200L2655 1175L2665 1195L2640 1230M2560 1220L2700 1240L2715 1225L2735 1218V1200M2640 1210L2660 1235M2720 1070L2740 1200L2735 1300M2710 1240L2725 1243L2780 1243L2790 1260L2770 1267H2740M2745 1255L2742 1270M2625 1240L2650 1250L2690 1248M2600 1238V1260M2640 1245L2640 1270L2680 1275M2650 1270L2640 1300M2680 1265L2665 1310L2655 1330M2690 1240L2685 1265L2635 1260M2755 1283L2790 1280L2770 1310L2740 1300M2745 1275L2765 1300M2740 1290H2770M2805 1290L2830 1265L2850 1285L2825 1310zM2815 1280L2840 1300M2700 1290L2720 1300"/>
          <path d="M2870 1320L2880 1300L2920 1260L2940 1245M2890 1290L2920 1350M2900 1280L2940 1360M2915 1265L2950 1330M2865 1310L2885 1360M2880 1300L2910 1370M2920 1300L2890 1350M2930 1310L2900 1360M2820 1250L2855 1260L2870 1280M2870 1290L2860 1230L2840 1180"/>
          <path d="M2365 1280L2420 1260L2445 1290M2385 1270L2410 1360M2405 1275L2425 1350M2420 1290L2395 1340M2400 1300L2460 1285M2405 1325L2470 1305M2425 1350L2395 1360M2450 1340L2480 1320L2600 1340L2615 1370M2500 1310L2480 1370M2520 1320L2550 1380M2540 1300L2530 1360M2550 1310L2600 1370M2530 1335L2590 1380M2530 1260L2550 1270L2555 1255M2975 1130L3000 1150M3000 1208L3024 1210"/>
        </g>
        <g class="major">
          <path d="M1088 1028L1115 1012L1160 960L1208 905M1122 580L1130 640M1300 960L1324 995L1350 1040L1395 1100L1405 1120L1420 1135L1440 1150L1490 1190L1520 1215L1565 1235L1570 1255L1600 1285M1324 995L1400 1012L1520 1045L1600 1085L1650 1108L1690 1130L1740 1155L1770 1180"/>
          <path d="M1464 960L1470 985L1485 1020L1492 1070L1485 1110L1484 1150L1500 1210L1535 1260L1560 1310L1565 1335M1600 960L1540 1030L1505 1080L1490 1098L1467 1103L1440 1138L1395 1190L1383 1218L1350 1250L1325 1270L1308 1300L1290 1325M1565 1180L1552 1220L1530 1260L1510 1320L1490 1380M1660 960L1690 1015L1720 1060L1735 1110L1770 1150"/>
          <path d="M1088 1190L1160 1218L1180 1230L1220 1265L1260 1305L1290 1325L1380 1380M1180 1225L1230 1250L1290 1290L1340 1320L1400 1365L1430 1370L1460 1390M1166 1200V1218M1088 1200L1110 1198M1480 632L1510 640L1560 650L1590 670L1610 700M1510 635L1560 590L1575 576M1450 630L1480 640M1690 722L1738 668M1088 600L1115 576M1155 805L1208 850M1208 700L1195 770L1176 815M1655 1105L1715 1062M1640 1265L1660 1235L1700 1222"/>
          <path d="M1700 1050L1720 1065M1928 960L1890 1020L1872 1045L1873 1085L1850 1090M1825 1098L1850 1092L1878 1098L1935 1028L2010 955M1978 995L2035 1050L2060 1070L2120 1050L2200 1032L2235 1005L2270 990L2300 993L2400 1008M1870 1103L1860 1130L1800 1200L1760 1225L1735 1290L1725 1340M1880 1105L1900 1140M1812 1127L1885 1210L1915 1245L1905 1280M1755 1150L1810 1230L1830 1280M1775 1380L1830 1320L1905 1278L2030 1282L2115 1300L2240 1290L2400 1265"/>
          <path d="M2038 1200L2030 1245M2230 1055L2045 1240M2240 1050L2250 1160L2252 1290L2270 1340L2285 1345M2245 1055L2360 1155L2450 1228L2530 1255L2600 1280L2690 1315L2810 1360L2850 1384M2098 1185L2120 1210L2128 1240L2110 1302L2096 1340L2120 1380M2130 1300L2060 1345L2020 1380M1920 1370L1990 1300M2590 960L2560 1040L2540 1060M2400 1010L2440 1030L2520 1045L2545 1072L2610 1070L2680 1042L2720 1052L2742 1064M2740 1065L2640 1140L2560 1210L2540 1230M2740 1065L2790 1040L2860 1015L2900 1010L3024 1008"/>
          <path d="M2500 1200L2510 1250L2515 1320L2518 1384M2400 1290L2450 1258L2560 1300L2680 1340L2760 1360M2450 1258L2400 1275L2340 1282M2290 1350L2340 1312L2370 1290M2820 1340L2840 1300L2900 1260L2930 1240"/>
          <path d="M2200 580L2225 630L2260 640L2300 645L2340 660L2380 655L2410 670L2430 700M2165 580L2140 640L2095 700M2710 705L2660 820L2620 950L2580 980M2692 750L2720 800L2750 835L2780 940L2805 970L2820 1030L2840 1130L2865 1270M2569 777L2615 810L2660 818L2745 828M2775 883L2800 875L2840 873L2865 860L2890 830L2915 830L2950 855L2975 862M2710 620L2790 576M2012 600L2030 640"/>
        </g>
        <g class="hw-case"><use href="#ramps"/><use href="#us206"/><use href="#us1n"/><use href="#us1s"/><use class="wide" href="#i295"/></g>
        <g class="hw-fill"><use href="#ramps"/><use href="#us206"/><use href="#us1n"/><use href="#us1s"/><use class="wide" href="#i295"/></g>
        <circle class="rotary" cx="1869" cy="1100" r="7"/>

        <g class="lbl road">
          <text x="1340" y="606" transform="rotate(-10 1340 606)">Ferry Rd</text>
          <text><textPath href="#p-egg" textLength="184">Eggert Crossing Rd</textPath></text>
          <text><textPath href="#p-scotch">Scotch Rd</textPath></text>
          <text transform="translate(1064 757) rotate(36)" textLength="108">rkway Ave</text>
          <text transform="translate(1311 696) rotate(-88)">Ro</text>
          <text transform="translate(1606 694) rotate(58)">Ewing</text>
          <text transform="translate(1974 694) rotate(28)">Darrah</text>
          <text transform="translate(1552 1032) rotate(-54)" textLength="118">Parkside Ave</text>
          <text transform="translate(1512 1043) rotate(25)" textLength="106">N Olden Ave</text>
          <text transform="translate(1716 1066) rotate(60)" textLength="84">Spruce St</text>
          <text transform="translate(1902 1002) rotate(-58)">Princeton</text>
          <text transform="translate(1093 1116) rotate(51)" textLength="112">Sullivan Way</text>
          <text transform="translate(1566 1203) rotate(-74)">Prospect</text>
          <text transform="translate(1497 1360) rotate(-68)" textLength="78">spect St</text>
          <text transform="translate(2052 1196) rotate(-80)" textLength="118">Whitehead Rd</text>
          <text><textPath href="#p-sweet" textLength="132">Sweetbriar Ave</textPath></text>
          <text><textPath href="#p-klock">Klockner Rd</textPath></text>
          <text transform="translate(1830 1282) rotate(61)" textLength="108">N Olden Ave</text>
          <text transform="translate(1948 1356) rotate(-45)">E State St</text>
          <text transform="translate(1660 1368) rotate(-47)">runswick</text>
          <text transform="translate(1764 1380) rotate(-45)">n Ave</text>
          <text transform="translate(2240 1384) rotate(-33)" textLength="114">Hamilton Ave</text>
          <text transform="translate(2434 1022) rotate(13)" textLength="86">Sloan Ave</text>
          <text x="2607" y="1051" textLength="77">Flock Rd</text>
          <text><textPath href="#p-qb2" textLength="152">Quakerbridge Rd</textPath></text>
          <text transform="translate(2620 1160) rotate(-38)" textLength="108">Edinburg Rd</text>
          <text><textPath href="#p-qb1" textLength="158">Quakerbridge Rd</textPath></text>
          <text transform="translate(2749 844) rotate(70)" textLength="90">Hughes Dr</text>
          <text transform="translate(2973 869) rotate(-32)">Paxson</text>
          <text transform="translate(2484 752) rotate(18)">oungs Rd</text>
        </g>
        <text class="lbl avenue" transform="translate(1734 1222) rotate(-51)" textLength="136">Princeton Ave</text>
        <g class="lbl state">
          <text transform="translate(1085 1245) rotate(28)" textLength="164">NEW JERSEY</text>
          <text transform="translate(1048 1278) rotate(30)" textLength="208">PENNSYLVANIA</text>
        </g>
        <g class="lbl town">
          <text x="2025" y="599" text-anchor="middle">Lawrence</text>
          <text x="2025" y="628" text-anchor="middle">Township</text>
          <text x="2582" y="805" textLength="174">Quaker Bridge</text>
        </g>
        <g class="lbl area">
          <text x="2343" y="1231" textLength="330">MERCERVILLE-HAMILTON</text>
          <text x="2456" y="1255" textLength="104">SQUARE</text>
          <text x="2415" y="1295" textLength="180">MERCERVILLE</text>
          <text x="2674" y="1362" textLength="138">HAMILTON</text>
          <text x="2692" y="1386" textLength="102">SQUARE</text>
        </g>
        <g class="lbl campus">
          <text x="1445" y="654">College</text>
          <text x="1374" y="682" textLength="178">of New Jersey</text>
          <text x="2856" y="978" textLength="167">Mercer Count</text>
          <text x="2877" y="1005" textLength="143">Community</text>
          <text x="2902" y="1034">College</text>
        </g>
        <text class="lbl lake" transform="translate(2986 759) rotate(10)">Mercer</text>

        <g class="shield">
          <use href="#us" x="1934" y="705"/>
          <use href="#us" x="2266" y="679"/><text x="2266" y="687">1</text>
          <use href="#us" x="1925" y="1059"/><text x="1925" y="1068">1</text>
          <use href="#us" x="1963" y="1124"/><text x="1963" y="1133">1</text>
          <use href="#us" x="1846" y="1065"/><text x="1846" y="1074">206</text>
          <rect x="1602" y="1015" width="43" height="22"/><text x="1624" y="1033">627</text>
          <rect x="1909" y="1023" width="32" height="16"/><text class="bus" x="1925" y="1037">BUS</text>
          <rect x="2285.500" y="1270" width="32" height="26" rx="12"/><text x="2302" y="1291">33</text>
          <rect x="1563" y="1338" width="28" height="24" rx="12"/>
        </g>
        <g class="interstate">
          <use href="#is" x="2399" y="1026"/><text x="2399" y="1034">295</text>
          <use href="#is" x="2371" y="1332"/><text x="2371" y="1340">295</text>
        </g>
        <rect class="station" x="2310" y="940" width="26" height="22" rx="4"/>
        <g class="school"><path d="M2947 948C2945 932 2928 922 2928 908A19 18 0 0 1 2966 908C2966 922 2949 932 2947 948z"/><path class="cap" d="M2934 907L2947 901L2960 907V918H2958V909L2947 914zM2939 912V917Q2947 924 2955 917V912L2947 916z"/></g>
        <text class="wordmark" x="1108" y="1363" textLength="112">Google</text>

        <g class="pins">
          <use href="#pin" x="1777" y="577"/><use href="#pin" x="1464" y="660"/><use href="#pin" x="2053" y="646"/>
          <use href="#pin" x="1531" y="880"/><use href="#pin" x="1995" y="892"/><use href="#pin" x="1855" y="980"/>
          <use href="#pin" x="1359" y="1082"/><use href="#pin" x="1592.500" y="1086"/><use href="#pin" x="1581" y="1088"/>
          <use href="#pin" x="2250.500" y="1150"/><use href="#pin" x="1677" y="1188"/><use href="#pin" x="1824.500" y="1216"/>
          <use href="#pin" x="1499" y="1234"/><use href="#pin" class="pin-you" x="2015" y="1242"/><use href="#pin" x="1353" y="1258"/>
          <use href="#pin" x="1627" y="1258"/><use href="#pin" x="1734.500" y="1278"/><use href="#pin" x="1737" y="1283"/>
          <use href="#pin" x="1649" y="1283"/><use href="#pin" x="1920.500" y="1284"/><use href="#pin" x="1599" y="1292"/>
          <use href="#pin" x="1715" y="1300"/><use href="#pin" x="1549" y="1316"/><use href="#pin" x="1751" y="1322"/>
          <use href="#pin" x="1974.500" y="1322"/><use href="#pin" x="2971" y="1333"/><use href="#pin" x="1460" y="1334"/>
          <use href="#pin" x="1897" y="1342"/><use href="#pin" x="1734" y="1349"/><use href="#pin" x="1729.500" y="1349"/>
          <use href="#pin" x="1703" y="1353"/><use href="#pin" x="1639" y="1362"/><use href="#pin" x="1599" y="1363"/>
        </g>
      </svg>

      <div class="map-types"><span class="mt-on">Map</span><span class="mt-off">Satellite</span></div>
      <div class="map-btn full"><svg viewBox="0 0 36 36"><path d="M2 12V2H12M24 2H34V12M34 24V34H24M12 34H2V24"/></svg></div>
      <div class="map-btn peg"><svg viewBox="0 0 34 60"><g class="peg-fig"><path d="M8 20H26L28 24L33 42L28 44L25 34V59H18.500V44H15.500V59H9V34L6 44L1 42L6 24z"/><circle cx="17" cy="11" r="10"/></g><path class="peg-v" d="M10 20.500H24L17 31z"/></svg></div>
      <div class="map-btn zoomer"><svg viewBox="0 0 80 162"><path class="zs" d="M22 40H58M40 22V58M22 122H58"/><path class="zd" d="M10 81H70"/></svg></div>
      <div class="attrib"><span class="a1">Keyboard shortcuts</span><span class="a2">Map data ©2022 Google</span><span class="a3">Terms of Use</span><span class="a4">Report a map error</span></div>

      <div class="info">
        <svg class="info-close" viewBox="0 0 16 16"><path d="M1 1L15 15M15 1L1 15"/></svg>
        <h4>Homefront</h4>
        <p class="info-addr">1880 Princeton Ave. Lawrenceville, NJ 08648</p>
        <p class="info-text">Mondays 10am-2pm, Tuesdays 2-6pm and Thursdays 10am-2pm. Distribution from loading dock area,<br>side of building.</p>
        <svg class="info-tail" viewBox="0 0 46 22"><path d="M0 0H46L23 22z"/></svg>
      </div>
    </div>

    <article class="results">
      <h3 class="r-title"><span>A.M.E.N (A Meal Encourages Nourishment)</span></h3>
      <p class="muted"><span>81 Bellevue Avenue, Trenton, NJ 08618</span></p>
      <p class="r-when"><svg class="ic25"><use href="#i-calendar"/></svg><a class="link">Every month on the last Sunday from 1:30 PM to 5:30 PM starting on June 26, 2022</a></p>
      <p><span><b>People Served:</b> No known restrictions</span></p>
      <p><span><b>Food Offered:</b> Meals - sit down</span></p>
      <p class="r-access"><svg class="ic35"><use href="#i-wheelchair"/></svg><b>Accessibility Not Rated</b></p>
      <p><span>Last Sunday of the month. 1:30pm to 5:30pm. First come first served. Anyone in need. Location: King David Lodge.</span></p>
      <p class="muted r-phone"><span>Phone: 609-882-7719</span></p>
      <hr>
    </article>
  </div>
</main>
</body>
</html>
```
FILE: styles.css
```css
* { box-sizing: border-box; }

body {
  margin: 0;
  height: 1946px;
  overflow: hidden;
  background: #d8dffc;
  color: #212529;
  font: 400 32px/48px Inter, sans-serif;
}
h1, h2, h3, h4, p, ul { margin: 0; padding: 0; font-weight: 400; }
ul { list-style: none; }
svg { display: block; fill: currentColor; flex: none; }
.sprite { position: absolute; width: 0; height: 0; }
.container { width: 2592px; margin: 0 auto; }

.btn {
  display: flex; align-items: center; justify-content: center;
  height: 76px; border: 2px solid transparent; border-radius: 8px; flex: none;
}
.btn-primary { background: #316cf4; color: #fff; }
.btn-line { border-color: #316cf4; color: #316cf4; }

/* header */
.topbar { height: 24px; background: #316cf4; }
.header { height: 160px; background: #fff; box-shadow: 0 4px 12px rgba(40, 50, 90, .15); position: relative; }
.header-row { height: 100%; display: flex; justify-content: space-between; }
.brand { display: flex; align-items: center; height: 152px; padding-left: 2px; }
.logo { width: 96px; height: 104px; }
.logo-tile { fill: #fff; stroke: #f5f5f5; stroke-width: 3; stroke-linejoin: round; }
.hand-blue { color: #466390; }
.hand-brown { color: #b86c3c; }
.spark-a { fill: #e69a44; }
.spark-b { fill: #5c8cc0; }
.site-title { width: 631px; margin-left: 13px; padding-top: 1px; font-size: 40px; font-weight: 700; color: #1b1b1b; white-space: nowrap; }
.help {
  width: 32px; height: 32px; border-radius: 50%; background: #316cf4; color: #fff;
  margin: 6px 0 0 10px; text-align: center; font-size: 24px; font-weight: 800; line-height: 32px;
}
.header-actions { display: flex; align-items: center; }
.translate { width: 302px; margin: 10px 32px 0 0; font-family: "Liberation Sans", Arial, sans-serif; }
.lang-select {
  width: 291px; height: 38px; border: 2px solid #767676; border-radius: 5px; color: #000;
  display: flex; align-items: center; justify-content: space-between; padding: 0 6px 0 8px; font-size: 26.670px; line-height: 34px;
}
.lang-caret { width: 18px; height: 10px; fill: none; stroke: #000; stroke-width: 2; }
.powered { display: flex; align-items: baseline; font-size: 22px; line-height: 46px; height: 46px; color: #666; white-space: nowrap; }
.powered b { color: #444; margin-left: 8px; font-size: 24px; }
.g-logo { margin-left: 6px; font: 500 24px/46px Lato, sans-serif; letter-spacing: -1.700px; }
.g-b { color: #5a8df0; } .g-r { color: #e2584c; } .g-y { color: #f4bb3c; } .g-g { color: #58b06b; }
.btn-about { width: 142px; border-color: #6c757d; color: #6c757d; margin-right: 32px; }
.btn-login { width: 240px; }

.main { display: flex; gap: 32px; padding-top: 32px; align-items: flex-start; }
.panel-title { font-size: 48px; line-height: 56px; font-weight: 700; }

/* filters */
.filters { width: 624px; height: 1706px; background: #fff; border-radius: 10px; overflow: hidden; flex: none; padding: 0 32px 0 8px; }
.filters-head { height: 132px; padding: 0 16px 0 24px; display: flex; align-items: center; justify-content: space-between; }
.filters-head .panel-title { margin-top: 5px; }
.tri { width: 20px; height: 14px; margin-top: 2px; }
.btn-clear { margin: 0 72px 32px 48px; border-color: #cf434b; color: #cf434b; }
.acc-head {
  height: 104px; background: #e8f1fe; border-bottom: 2px solid #cbd5e2; color: #2c62dc;
  display: flex; align-items: center; justify-content: space-between; padding: 0 44px 0 40px;
}
.acc-head span { font-size: 32px; font-weight: 700; padding-top: 2px; }
.chev { width: 32px; height: 18px; }
.acc-list { border: 2px solid #dedede; margin-bottom: 2px; box-shadow: 0 2px #dedede; }
.acc-list li { display: flex; align-items: center; gap: 17px; height: 82px; padding-left: 32px; border-bottom: 2px solid #dedede; }
.acc-list li:last-child { height: 80px; border-bottom: 0; }
.acc-list li.pick { height: 110px; padding: 16px 0 0 48px; gap: 16px; align-items: flex-start; }
input[type=checkbox] { appearance: none; width: 32px; height: 32px; margin: 0; border: 2px solid #bfbfbf; border-radius: 8px; background: #fff; flex: none; }
.pick input[type=checkbox] { margin-top: 16px; }
.field {
  width: 413px; height: 76px; border: 2px solid #ced4da; border-radius: 8px;
  display: flex; align-items: center; justify-content: space-between; padding: 0 33px 0 24px;
}
.time { padding-right: 33px; }
.date { padding-right: 31px; }
.time span { letter-spacing: .5px; }
.clock { width: 28px; height: 28px; fill: none; stroke: #000; stroke-width: 2.800; }
.cal { width: 26px; height: 28px; fill: #000; }

/* search */
.content { width: 1936px; }
.searchbar { height: 140px; background: #fff; border-radius: 8px; display: flex; align-items: center; padding: 0 32px; }
.searchbar .panel-title { width: 320px; margin-top: -3px; }
.search-group { display: flex; width: 1072px; }
.text-input {
  flex: 1; min-width: 0; height: 76px; border: 2px solid #ced4da; padding: 0 24px 1px; background: #fff;
  font: 400 32px/48px Inter, sans-serif; color: #212529; border-radius: 8px 0 0 8px;
}
.text-input::placeholder { color: #6c757d; opacity: 1; }
.btn-search { width: 84px; margin-left: -2px; border-color: #6c757d; color: #6c757d; border-radius: 0 8px 8px 0; background: #fff; }
.views { display: flex; gap: 9px; margin-left: auto; }
.v-map { width: 88px; } .v-cal { width: 80px; } .v-print { width: 84px; }
.ic25 { width: 25px; height: 28px; color: #6c757d; }
.ic28 { width: 28px; height: 32px; }
.ic32 { width: 32px; height: 32px; }
.ic35 { width: 35px; height: 35px; }
.ic36 { width: 36px; height: 32px; }

.distance { margin-top: 32px; display: flex; flex-direction: column; gap: 8px; }
.distance-select {
  height: 76px; margin: 0 1px; background: #fff; border: 2px solid #ced4da; border-radius: 8px;
  display: flex; align-items: center; justify-content: space-between; padding: 0 27px 0 23px;
}
.distance-select span { letter-spacing: -.1px; }
.sel-caret { width: 24px; height: 14px; fill: none; stroke: #343a40; stroke-width: 3.500; stroke-linecap: round; stroke-linejoin: round; }
.address { display: flex; margin-left: -2px; }
.address .text-input { border-radius: 0; }
.btn-addr { width: 84px; border-radius: 0 6px 6px 0; }

/* map */
.map { position: relative; height: 800px; margin-top: 32px; overflow: hidden; font-family: Roboto, sans-serif; }
.map-canvas { width: 1936px; height: 800px; }
.land { fill: #e8eaed; }
.green { fill: #d5e6da; }
.park { fill: #b1dab9; }
.beige { fill: #ece9e3; }
.shop { fill: #fdf4dd; }
.airport { fill: #dfe0e4; }
.water { fill: #a4bff5; }
.creek, .trail, .rail, .minor, .major, .hw-case, .hw-fill, .border-line { fill: none; stroke-linejoin: round; }
.creek { stroke: #a4bff5; stroke-width: 2.500; }
.trail { stroke: #6fb57c; stroke-width: 1.800; }
.dash { stroke: #4fa45c; stroke-dasharray: 9 6; stroke-width: 2.200; }
.rail { stroke: #d3d5d9; stroke-width: 2.500; }
.border-line { stroke: #777e8c; stroke-width: 2; stroke-dasharray: 3 4; }
.minor { stroke: #fff; stroke-width: 2.300; }
.major { stroke: #fff; stroke-width: 6.500; stroke-linecap: round; }
.hw-case { stroke: #efb143; stroke-width: 10; }
.hw-fill { stroke: #fdedc2; stroke-width: 5.500; }
.hw-case .wide { stroke-width: 15; }
.hw-fill .wide { stroke-width: 10; }
.rotary { fill: #d5e6da; stroke: #fff; stroke-width: 4; }
.lbl { paint-order: stroke; stroke: #fff; stroke-width: 5px; stroke-linejoin: round; }
.road { font-size: 20.500px; fill: #54575b; stroke-opacity: .9; }
.avenue { font-size: 22px; fill: #6d3b10; }
.state { font-size: 26px; font-weight: 500; fill: #505862; stroke: #e6edfb; stroke-width: 4px; }
.town { font-size: 27px; fill: #1f2226; }
.area { font-size: 23px; fill: #54575b; font-weight: 500; }
.campus { font-size: 27px; fill: #5a7383; }
.lake { font-size: 26px; fill: #2c5cb8; stroke: none; }
.shield { fill: #fff; stroke: #676a6d; stroke-width: 2.500; text-anchor: middle; }
.shield text { fill: #3a3c3f; stroke: none; font-size: 23px; }
.shield .bus { font-size: 16px; font-weight: 500; }
.interstate { text-anchor: middle; }
.interstate text { fill: #fff; font-size: 19px; font-weight: 500; }
.is-b { fill: #4a77c4; }
.is-r { fill: #c9635f; }
.station { fill: #2f5fc4; }
.school { fill: #7b8f9c; stroke: #66798a; stroke-width: 1; }
.cap { fill: #fff; stroke: none; }
.wordmark { font: 400 36px Lato, sans-serif; fill: #fff; stroke: #8d9196; stroke-width: 4px; paint-order: stroke; }
.pins { fill: #3b78de; }
.pin-halo { stroke: #e8eefb; stroke-width: 2.500; }
.pin-you { fill: #ce6637; --dot: #742c12; }
.pin-dot { fill: var(--dot, #1b427e); }

.map-types {
  position: absolute; left: 20px; top: 20px; width: 336px; height: 80px; background: #fff; border-radius: 4px;
  box-shadow: 0 2px 8px rgba(0, 0, 0, .3); display: flex; align-items: center; font-size: 36px;
}
.mt-on { width: 139px; padding-left: 34px; font-weight: 500; color: #000; border-right: 2px solid #ececec; line-height: 80px; flex: none; }
.mt-off { padding-left: 34px; color: #565656; }
.map-btn {
  position: absolute; right: 20px; width: 80px; height: 80px; background: #fff; border-radius: 4px;
  box-shadow: 0 2px 8px rgba(0, 0, 0, .3); display: flex; align-items: center; justify-content: center;
}
.full { top: 20px; }
.full svg { width: 36px; height: 36px; fill: none; stroke: #666; stroke-width: 4; }
.peg { top: 446px; }
.peg svg { width: 34px; height: 60px; }
.peg-fig { fill: #f4bd4a; stroke: #84734e; stroke-width: 1.600; }
.peg-v { fill: #dc8742; }
.zoomer { top: 590px; height: 162px; }
.zoomer svg { width: 80px; height: 162px; fill: none; }
.zs { stroke: #666; stroke-width: 8; }
.zd { stroke: #e6e6e6; stroke-width: 2; }
.attrib {
  position: absolute; right: 0; bottom: 0; height: 28px; width: 771px; background: rgba(245, 245, 245, .7);
  display: flex; font-size: 20px; line-height: 30px; color: #000; white-space: nowrap; padding-left: 11px;
}
.a1 { width: 197px; } .a2 { width: 242px; } .a3 { width: 142px; }

.info { position: absolute; left: 120px; top: 121px; width: 1296px; height: 255px; background: #fff; border-radius: 16px; box-shadow: 0 4px 14px 2px rgba(0, 0, 0, .3); padding: 18px 24px 0; font-family: Inter, sans-serif; }
.info h4 { font-size: 32px; line-height: 50px; font-weight: 500; }
.info-addr { font-size: 22.700px; line-height: 30px; margin-top: 9px; font-weight: 300; white-space: nowrap; }
.info-text { font-size: 26px; line-height: 31px; margin-top: 30px; font-weight: 300; white-space: nowrap; }
.info-close { position: absolute; right: 10px; top: 10px; width: 16px; height: 16px; fill: none; stroke: #666; stroke-width: 2.400; }
.info-tail { position: absolute; left: 625px; top: 254px; width: 46px; height: 22px; fill: #fff; }

/* results */
.results { margin-top: 32px; height: 540px; background: #fff; border-radius: 10px 10px 0 0; padding: 47px 8px 0; font-size: 28px; }
.results h3, .results p { height: 50px; padding-left: 32px; line-height: 50px; display: flex; align-items: center; white-space: nowrap; }
.results .r-title { font-size: 32px; height: 49px; }
.results .r-title span, .results b { font-weight: 700; letter-spacing: -.1px; }
.results .muted { color: #6c757d; }
.results .r-when { margin-top: 2px; gap: 8px; }
.link { color: #316cf4; text-decoration: underline; text-decoration-thickness: 2px; text-underline-offset: 4px; }
.results .r-access { gap: 7px; }
.results .r-phone { margin-top: 4px; }
.results hr { border: 0; height: 2px; background: #dedede; margin: 46px 0 0; }
```
